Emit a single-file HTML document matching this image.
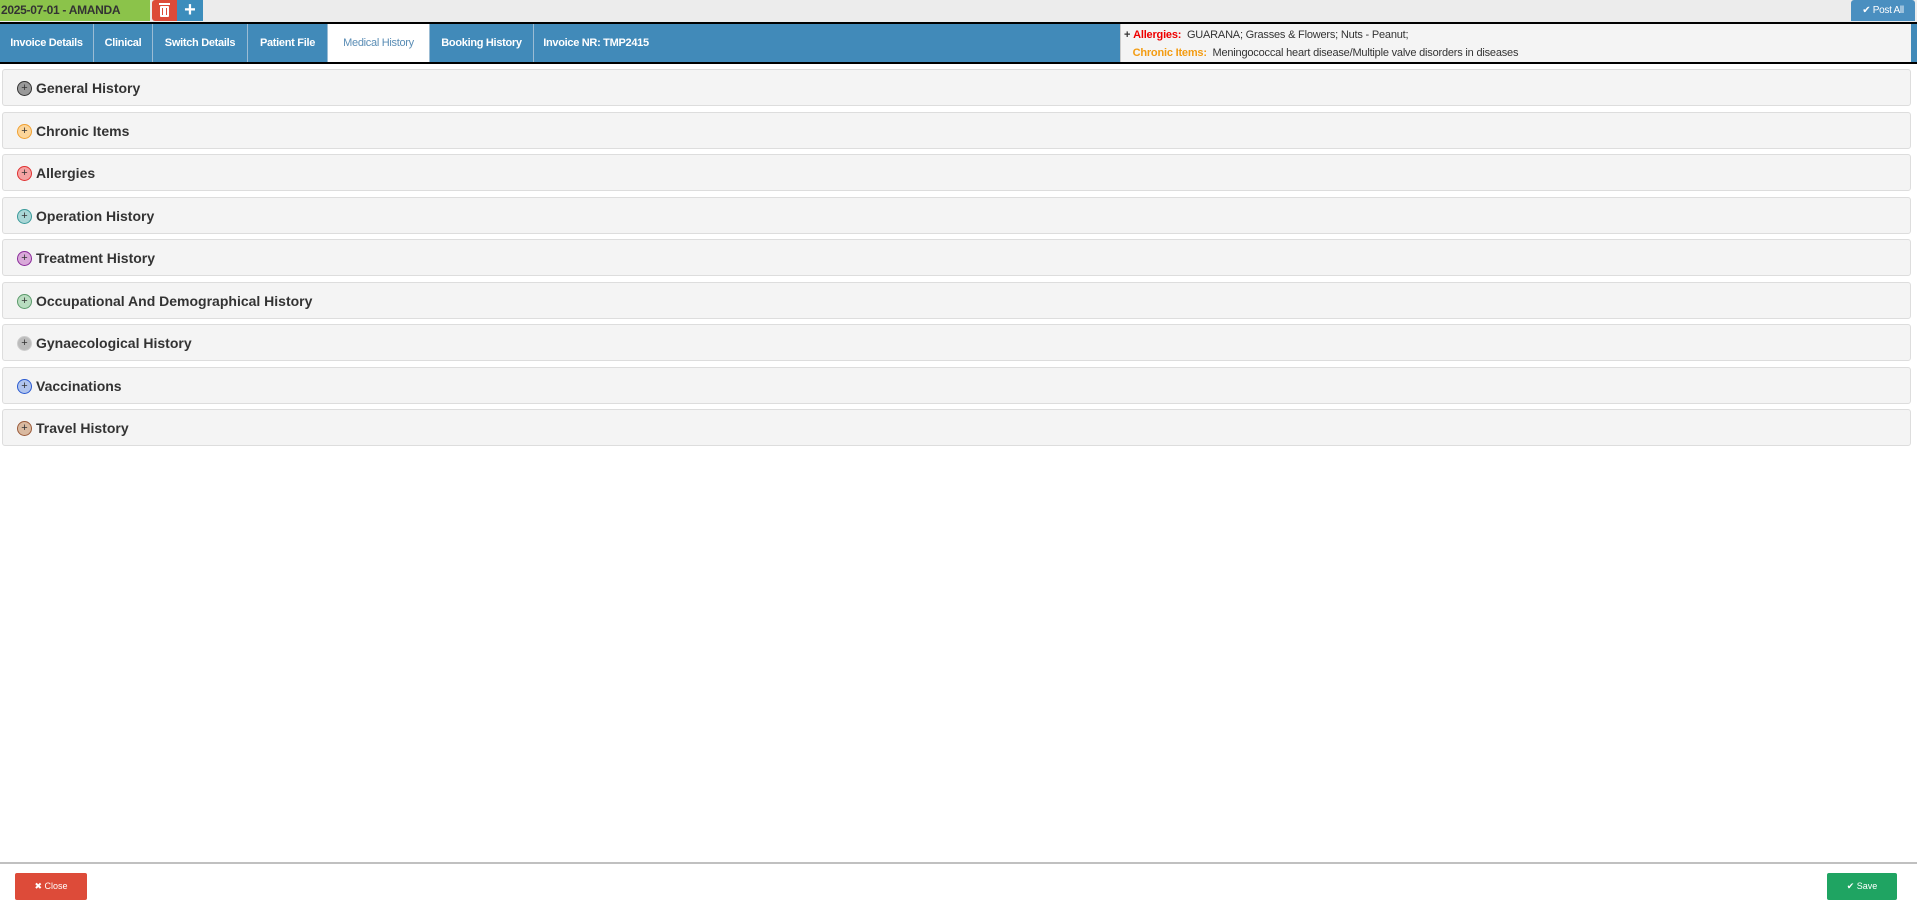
<!DOCTYPE html>
<html><head><meta charset="utf-8"><style>
*{box-sizing:border-box;margin:0;padding:0}
body{width:1917px;height:904px;background:#fff;font-family:"Liberation Sans",sans-serif;position:relative;overflow:hidden}
.topbar{position:absolute;left:0;top:0;width:1917px;height:22px;background:#ececec}
.green{position:absolute;left:0;top:0;width:150px;height:21px;background:#8bc34a;color:#333;font-size:12px;font-weight:bold;line-height:21px;padding-left:1px;letter-spacing:-0.3px}
.trash{position:absolute;left:152px;top:0;width:25px;height:21px;background:#dd4b39;border-radius:3px 0 0 3px}
.plus{position:absolute;left:177px;top:0;width:26px;height:21px;background:#3c8dbc;color:#fff;font-size:20px;line-height:20px;text-align:center;font-weight:bold}
.post{position:absolute;left:1851px;top:0;width:64px;height:21px;background:#4a8fc0;color:#fff;font-size:10px;line-height:21px;text-align:center;border-radius:3px 3px 0 0;letter-spacing:-0.3px}
.tabs{position:absolute;left:0;top:22px;width:1917px;height:42px;background:#418ab9;border-top:2px solid #000;border-bottom:2px solid #000}
.tab{position:absolute;top:0;height:38px;line-height:38px;color:#fff;font-size:11px;font-weight:bold;text-align:center;border-right:1px solid #9bbcd4;white-space:nowrap;letter-spacing:-0.3px}
.tab.act{background:#fff;color:#5a8db5;font-weight:normal}
.info{position:absolute;left:1120px;top:0;width:791px;height:38px;background:#f4f4f4;font-size:11px;color:#333;padding:2px 0 0 3px;border-left:1px solid #ccc;letter-spacing:-0.2px}
.info div{height:18px;line-height:18px}
.panel{position:absolute;left:2px;width:1909px;height:37px;background:#f4f4f4;border:1px solid #ddd;border-radius:3px}
.panel span.t{position:absolute;left:33px;top:0;line-height:36px;font-size:14px;font-weight:bold;color:#333}
.ic{position:absolute;left:14px;top:11px;width:15px;height:15px;border-radius:50%;border:1px solid;font-size:11px;line-height:12px;text-align:center;color:#333}
.line{position:absolute;left:0;top:862px;width:1917px;height:2px;background:#c0c0c0}
.btn{position:absolute;top:873px;height:27px;color:#fff;font-size:9px;line-height:27px;text-align:center;border-radius:2px}
</style></head><body>
<div class="topbar"></div>
<div class="green">2025-07-01 - AMANDA</div>
<div class="trash"><svg width="25" height="21"><rect x="8" y="6" width="9" height="11" rx="1" fill="#fff"/><rect x="7" y="3" width="11" height="2" fill="#fff"/><rect x="10" y="8" width="1" height="7" fill="#dd4b39"/><rect x="14" y="8" width="1" height="7" fill="#dd4b39"/></svg></div>
<div class="plus">+</div>
<div class="post">&#10004; Post All</div>
<div class="tabs">
<div class="tab" style="left:0;width:94px">Invoice Details</div>
<div class="tab" style="left:94px;width:59px">Clinical</div>
<div class="tab" style="left:153px;width:95px">Switch Details</div>
<div class="tab" style="left:248px;width:80px">Patient File</div>
<div class="tab act" style="left:328px;width:102px">Medical History</div>
<div class="tab" style="left:430px;width:104px">Booking History</div>
<div class="tab" style="left:534px;width:124px;border:none">Invoice NR: TMP2415</div>
<div class="info"><div><b>+</b> <b style="color:#e00">Allergies:</b>&nbsp; GUARANA; Grasses &amp; Flowers; Nuts - Peanut;</div><div>&nbsp;&nbsp;&nbsp;<b style="color:#f39c12">Chronic Items:</b>&nbsp; Meningococcal heart disease/Multiple valve disorders in diseases</div></div>
</div>
<div class="panel" style="top:69px"><span class="ic" style="background:#999;border-color:#333">+</span><span class="t">General History</span></div>
<div class="panel" style="top:112px"><span class="ic" style="background:#fcd59a;border-color:#f0a030">+</span><span class="t">Chronic Items</span></div>
<div class="panel" style="top:154px"><span class="ic" style="background:#f5a3a3;border-color:#e03030">+</span><span class="t">Allergies</span></div>
<div class="panel" style="top:197px"><span class="ic" style="background:#a9d6d6;border-color:#3a9a9a">+</span><span class="t">Operation History</span></div>
<div class="panel" style="top:239px"><span class="ic" style="background:#d9a9d9;border-color:#8a2a9a">+</span><span class="t">Treatment History</span></div>
<div class="panel" style="top:282px"><span class="ic" style="background:#b9dcc0;border-color:#5a9a6a">+</span><span class="t">Occupational And Demographical History</span></div>
<div class="panel" style="top:324px"><span class="ic" style="background:#bbb;border-color:#ccc">+</span><span class="t">Gynaecological History</span></div>
<div class="panel" style="top:367px"><span class="ic" style="background:#b0c4ee;border-color:#2a5ad0">+</span><span class="t">Vaccinations</span></div>
<div class="panel" style="top:409px"><span class="ic" style="background:#d9b9a0;border-color:#9a5a3a">+</span><span class="t">Travel History</span></div>
<div class="line"></div>
<div class="btn" style="left:15px;width:72px;background:#dd4b39">&#10006; Close</div>
<div class="btn" style="left:1827px;width:70px;background:#1fa462">&#10004; Save</div>
</body></html>
